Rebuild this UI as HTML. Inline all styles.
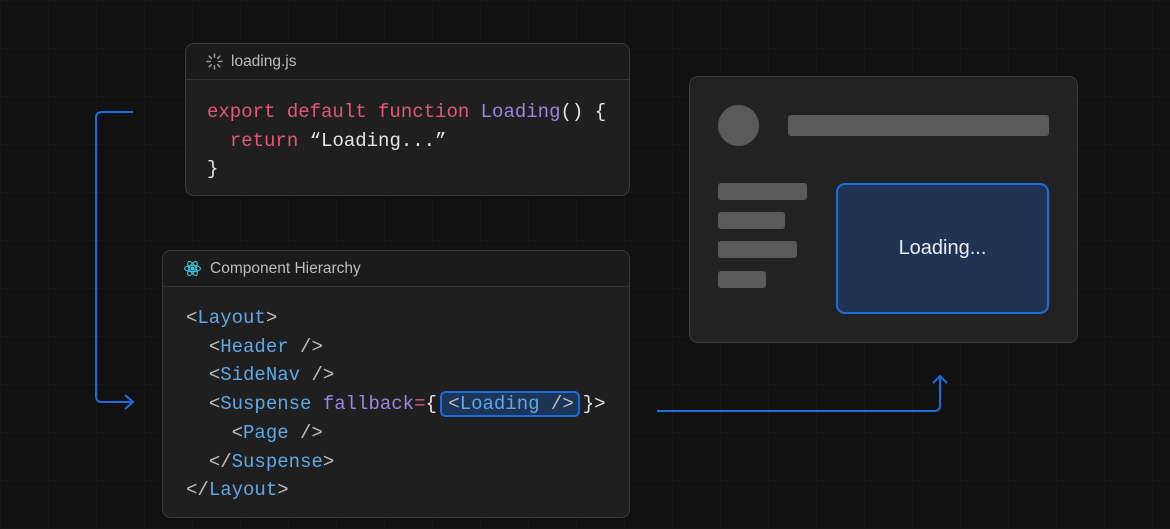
<!DOCTYPE html>
<html><head><style>
*{margin:0;padding:0;box-sizing:border-box}
body{width:1170px;height:529px;overflow:hidden;background:#111;position:relative;font-family:"Liberation Sans",sans-serif;
background-image:linear-gradient(#171717 1px,transparent 1px),linear-gradient(90deg,#171717 1px,transparent 1px);background-size:48px 48px;}
.card{position:absolute;background:#1f1f1f;border:1px solid #3a3a3a;border-radius:9px;overflow:hidden}
.hd{height:36px;border-bottom:1px solid #343434;background:#1b1b1b;display:flex;align-items:center;padding-left:20px;color:#bdbdbd;font-size:15.5px;gap:8px}
pre{font-family:"Liberation Mono",monospace;font-size:19px;line-height:28.7px;color:#e6e6e6;position:absolute}
.r{color:#e5577a}.p{color:#9d86e0}.b{color:#5fa8e8}.g{color:#bfbfbf}
.hl{border:2px solid #1a6fe0;background:#1c3556;border-radius:6px;padding:0 4px 0 6px;margin:0 3px 0 -8px}
.bar{position:absolute;background:#5a5a5a;border-radius:3px}
</style></head><body>
<svg width="1170" height="529" style="position:absolute;left:0;top:0">
<path d="M133 112 H102 Q96 112 96 118 V396 Q96 402 102 402 H133" fill="none" stroke="#1a6fe0" stroke-width="2"/>
<path d="M125 395 L133 402 L125 409" fill="none" stroke="#1a6fe0" stroke-width="2"/>
<path d="M657 411 H934 Q940 411 940 405 V376" fill="none" stroke="#1a6fe0" stroke-width="2"/>
<path d="M933 383 L940 376 L947 383" fill="none" stroke="#1a6fe0" stroke-width="2"/>
</svg>
<div class="card" style="left:185px;top:43px;width:445px;height:153px">
<div class="hd"><svg width="17" height="17" viewBox="0 0 16 16" stroke="#999" stroke-width="1.4" stroke-linecap="round"><path d="M8 1v3M8 12v3M1 8h3M12 8h3M3 3l2 2M11 11l2 2M3 13l2-2M11 5l2-2"/></svg>loading.js</div>
<pre style="left:21px;top:54px"><span class="r">export default function</span> <span class="p">Loading</span>() {
  <span class="r">return</span> “Loading...”
}</pre>
</div>
<div class="card" style="left:162px;top:250px;width:468px;height:268px">
<div class="hd"><svg width="19" height="19" viewBox="-12 -12 24 24" fill="none" stroke="#3ec5d6" stroke-width="1.4"><circle r="2" fill="#3ec5d6"/><ellipse rx="10" ry="4"/><ellipse rx="10" ry="4" transform="rotate(60)"/><ellipse rx="10" ry="4" transform="rotate(120)"/></svg>Component Hierarchy</div>
<pre style="left:23px;top:53px"><span class="g">&lt;</span><span class="b">Layout</span><span class="g">&gt;</span>
  <span class="g">&lt;</span><span class="b">Header</span> <span class="g">/&gt;</span>
  <span class="g">&lt;</span><span class="b">SideNav</span> <span class="g">/&gt;</span>
  <span class="g">&lt;</span><span class="b">Suspense</span> <span class="p">fallback</span><span class="r">=</span>{ <span class="hl"><span class="g">&lt;</span><span class="b">Loading</span> <span class="g">/&gt;</span></span>}&gt;
    <span class="g">&lt;</span><span class="b">Page</span> <span class="g">/&gt;</span>
  <span class="g">&lt;/</span><span class="b">Suspense</span><span class="g">&gt;</span>
<span class="g">&lt;/</span><span class="b">Layout</span><span class="g">&gt;</span></pre>
</div>
<div class="card" style="left:689px;top:76px;width:389px;height:267px;background:#222;border-color:#3c3c3c">
<div style="position:absolute;left:28px;top:28px;width:41px;height:41px;border-radius:50%;background:#5a5a5a"></div>
<div class="bar" style="left:98px;top:38px;width:261px;height:21px"></div>
<div class="bar" style="left:28px;top:106px;width:89px;height:17px"></div>
<div class="bar" style="left:28px;top:135px;width:67px;height:17px"></div>
<div class="bar" style="left:28px;top:164px;width:79px;height:17px"></div>
<div class="bar" style="left:28px;top:194px;width:48px;height:17px"></div>
<div style="position:absolute;left:146px;top:106px;width:213px;height:131px;border:2px solid #1a6fe0;border-radius:9px;background:#1f3452;color:#e8eef6;font-size:20px;display:flex;align-items:center;justify-content:center">Loading...</div>
</div>
</body></html>
